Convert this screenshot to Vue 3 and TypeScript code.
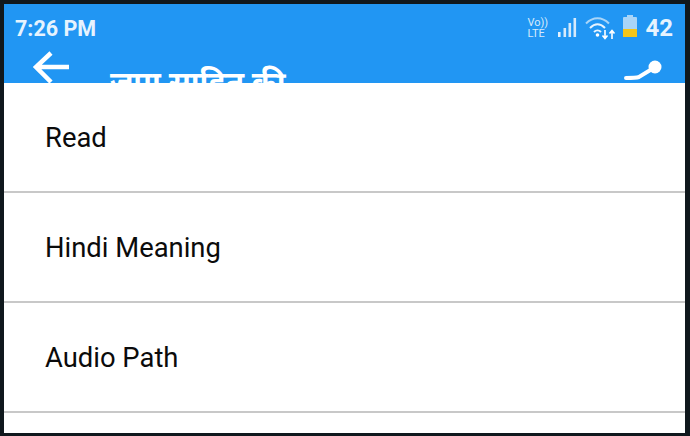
<template>
  <div class="frame">
    <div class="screen">
      <header class="appbar">
        <div class="status">
          <span class="time">7:26 PM</span>
          <div class="status-right">
            <span class="volte">Vo))<br />LTE</span>
            <svg class="signal" width="19" height="20" viewBox="0 0 19 20">
              <rect x="0" y="14" width="2.6" height="5" fill="#e3f1fd" />
              <rect x="5.5" y="10" width="2.6" height="9" fill="#d6eafb" />
              <rect x="10.5" y="5" width="2.6" height="14" fill="#d6eafb" />
              <rect x="15.5" y="0" width="2.6" height="19" fill="#d6eafb" />
            </svg>
            <svg class="wifi" width="31" height="23" viewBox="0 0 31 23" fill="none">
              <path d="M1 6.5C8 -0.5 17 -0.5 24 6.5" stroke="#a9d5f8" stroke-width="2" />
              <path d="M5 11C10 6 15 6 20 11" stroke="#e6f3fe" stroke-width="2" />
              <path d="M9 15C11 13 14 13 16 15" stroke="#e6f3fe" stroke-width="2" />
              <circle cx="12.5" cy="18" r="1.8" fill="#fff" />
              <path d="M20 13V21M17.5 18.5L20 21.5L22.5 18.5" stroke="#fff" stroke-width="1.6" />
              <path d="M27 22V14M24.5 16.5L27 13.5L29.5 16.5" stroke="#fff" stroke-width="1.6" />
            </svg>
            <div class="battery"><div class="battery-fill"></div></div>
            <span class="level">42</span>
          </div>
        </div>
        <div class="toolbar">
          <svg class="back" width="40" height="36" viewBox="0 0 40 36" fill="none">
            <path d="M38 16H5M20 2L5 16L20 31" stroke="#fff" stroke-width="4.5" />
          </svg>
          <span class="title">जपा साहित की</span>
          <svg class="route" width="40" height="24" viewBox="0 0 40 24" fill="none">
            <path d="M2 18C8 18 12 18 15 17L28 9" stroke="#fff" stroke-width="4" stroke-linecap="round" />
            <circle cx="31" cy="7" r="6.5" fill="#fff" />
          </svg>
        </div>
      </header>
      <ul class="menu">
        <li v-for="item in items" :key="item" class="row">{{ item }}</li>
        <li class="row empty"></li>
      </ul>
    </div>
  </div>
</template>

<script setup lang="ts">
const items: string[] = ['Read', 'Hindi Meaning', 'Audio Path']
</script>

<style>
html,
body {
  margin: 0;
  background: #0c1419;
}
</style>

<style scoped>
.frame {
  width: 690px;
  height: 436px;
  box-sizing: border-box;
  padding: 4px 5px 3px 4px;
  background: #10181d;
  overflow: hidden;
}

.screen {
  height: 100%;
  display: flex;
  flex-direction: column;
  background: #fff;
  overflow: hidden;
}

.appbar {
  flex: 0 0 79px;
  background: #2196f3;
  color: #fff;
  overflow: hidden;
}

.status {
  display: flex;
  justify-content: space-between;
  align-items: center;
  height: 48px;
  padding: 0 12px 0 11px;
  font-family: Roboto, sans-serif;
}

.time {
  font-size: 21.5px;
  font-weight: 700;
  color: #e6f3fe;
}

.status-right {
  display: flex;
  align-items: center;
}

.volte {
  font-size: 11px;
  line-height: 11px;
  color: #d6eafb;
  width: 19px;
  margin-right: 12px;
}

.signal {
  margin-right: 8px;
}

.wifi {
  margin-right: 7px;
}

.battery {
  position: relative;
  width: 14px;
  height: 20px;
  margin-top: -2px;
  background: #a9d5f8;
  border-radius: 1px;
  margin-right: 8px;
}

.battery::before {
  content: '';
  position: absolute;
  top: -2px;
  left: 4px;
  width: 6px;
  height: 2px;
  background: #a9d5f8;
}

.battery-fill {
  position: absolute;
  left: 0;
  right: 0;
  bottom: 0;
  height: 8px;
  background: #f5c518;
}

.level {
  font-size: 24px;
  font-weight: 700;
  color: #e6f3fe;
}

.toolbar {
  display: flex;
  align-items: flex-start;
  height: 31px;
  padding-left: 27px;
  padding-right: 21px;
}

.back {
  flex: none;
  margin-top: -1px;
}

.title {
  margin-left: 39px;
  margin-top: 10px;
  font-family: "Noto Sans", sans-serif;
  font-size: 30px;
  line-height: 40px;
  font-weight: 700;
  white-space: nowrap;
  flex: 1;
}

.route {
  margin-top: 8px;
  flex: none;
}

.menu {
  list-style: none;
  margin: 0;
  padding: 0;
  flex: 1;
  font-family: Roboto, sans-serif;
  font-size: 27.4px;
  color: #0b0b0b;
}

.row {
  box-sizing: border-box;
  height: 110px;
  padding-left: 41px;
  padding-top: 2px;
  display: flex;
  align-items: center;
  border-bottom: 2px solid #c8c8c8;
}

.row.empty {
  border-bottom: 0;
}
</style>
